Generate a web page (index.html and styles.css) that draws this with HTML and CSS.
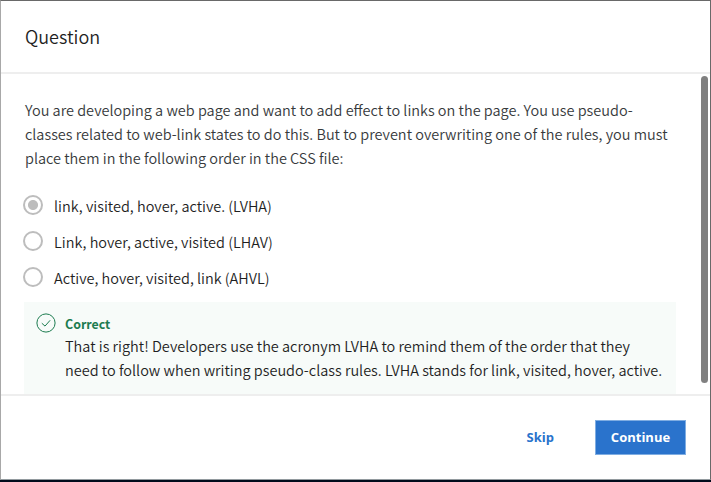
FILE: index.html
```html
<!DOCTYPE html>
<html lang="en">
<head>
<meta charset="utf-8">
<title>Question</title>
<link rel="stylesheet" href="styles.css">
</head>
<body>
<main class="dialog">
  <header class="header"><h1 class="title">Question</h1></header>
  <section class="body">
    <div class="content">
      <p class="prompt">You are developing a web page and want to add effect to links on the page. You use pseudo-<br>classes related to web-link states to do this. But to prevent overwriting one of the rules, you must<br>place them in the following order in the CSS file:</p>
      <div class="options">
        <div class="option"><span class="radio radio-checked"></span><span>link, visited, hover, active. (LVHA)</span></div>
        <div class="option"><span class="radio"></span><span>Link, hover, active, visited (LHAV)</span></div>
        <div class="option"><span class="radio"></span><span>Active, hover, visited, link (AHVL)</span></div>
      </div>
      <div class="feedback">
        <svg class="check" viewBox="0 0 20 20" fill="none" stroke="#1d7c50"><circle cx="10" cy="10" r="9.1"/><path d="M5.8 10.2 9 13.1 14.1 7.3"/></svg>
        <div class="message">
          <strong class="verdict">Correct</strong>
          <p class="explanation">That is right! Developers use the acronym LVHA to remind them of the order that they<br>need to follow when writing pseudo-class rules. LVHA stands for link, visited, hover, active.</p>
        </div>
      </div>
    </div>
    <div class="scrollbar"><div class="thumb"></div></div>
  </section>
  <footer class="footer">
    <button class="skip">Skip</button>
    <button class="continue">Continue</button>
  </footer>
</main>
</body>
</html>
```
FILE: styles.css
```css
* { box-sizing: border-box; }
body {
  margin: 0;
  height: 482px;
  overflow: hidden;
  background: #000c1c;
  color: #1f1f1f;
  font: 350 14.49px/24px "Noto Sans CJK SC", sans-serif;
  white-space: nowrap;
}
.dialog {
  display: flex;
  flex-direction: column;
  height: 480px;
  background: #fff;
  border: 1px solid #696969;
  border-left-color: #a8a8a8;
  border-bottom-color: #929a9e;
}
.header { height: 73px; padding: 23px 24px; border-bottom: 2px solid #eee; }
.title { margin: 0; font-size: 18px; font-weight: 350; line-height: 24px; }
.body { display: flex; height: 320px; overflow: hidden; }
.content { width: 675px; padding: 24px 0 0 23px; }
.prompt { margin: 0; padding-left: 1px; color: #373a3c; }
.options { margin-top: 18px; }
.option { display: flex; align-items: center; height: 36px; gap: 10px; margin-left: -1px; }
.option span:last-child { padding-left: 1px; }
.radio { width: 20px; height: 20px; margin-top: -2px; border: 2px solid #bdbdbd; border-radius: 50%; }
.radio-checked { background: radial-gradient(circle, #bdbdbd 0 4.6px, transparent 5.4px); }
.feedback { display: flex; height: 92px; margin-top: 6px; padding: 12px 12px 0; background: #f7fbf9; }
.check { flex: none; width: 20px; height: 20px; margin: -1px 9px 0 0; }
.verdict { display: block; color: #1d7c50; font-size: 12.4px; line-height: 20px; }
.explanation { margin: 0; }
.scrollbar { flex: 1; padding: 2px 2px 0; display: flex; justify-content: flex-end; }
.thumb { width: 7px; height: 307px; border-radius: 4px; background: #808080; }
.footer { display: flex; align-items: flex-start; justify-content: flex-end; flex: 1; padding: 24px 24px 0; border-top: 2px solid #eee; }
button { height: 35px; padding: 0 0 2px; border: 0; font: 700 13px/18px "Open Sans", sans-serif; }
.skip { margin-right: 41px; background: transparent; color: #2a73cc; }
.continue { width: 91px; border: 1px solid #7fade2; background: #2a73cc; color: #fff; }
```
